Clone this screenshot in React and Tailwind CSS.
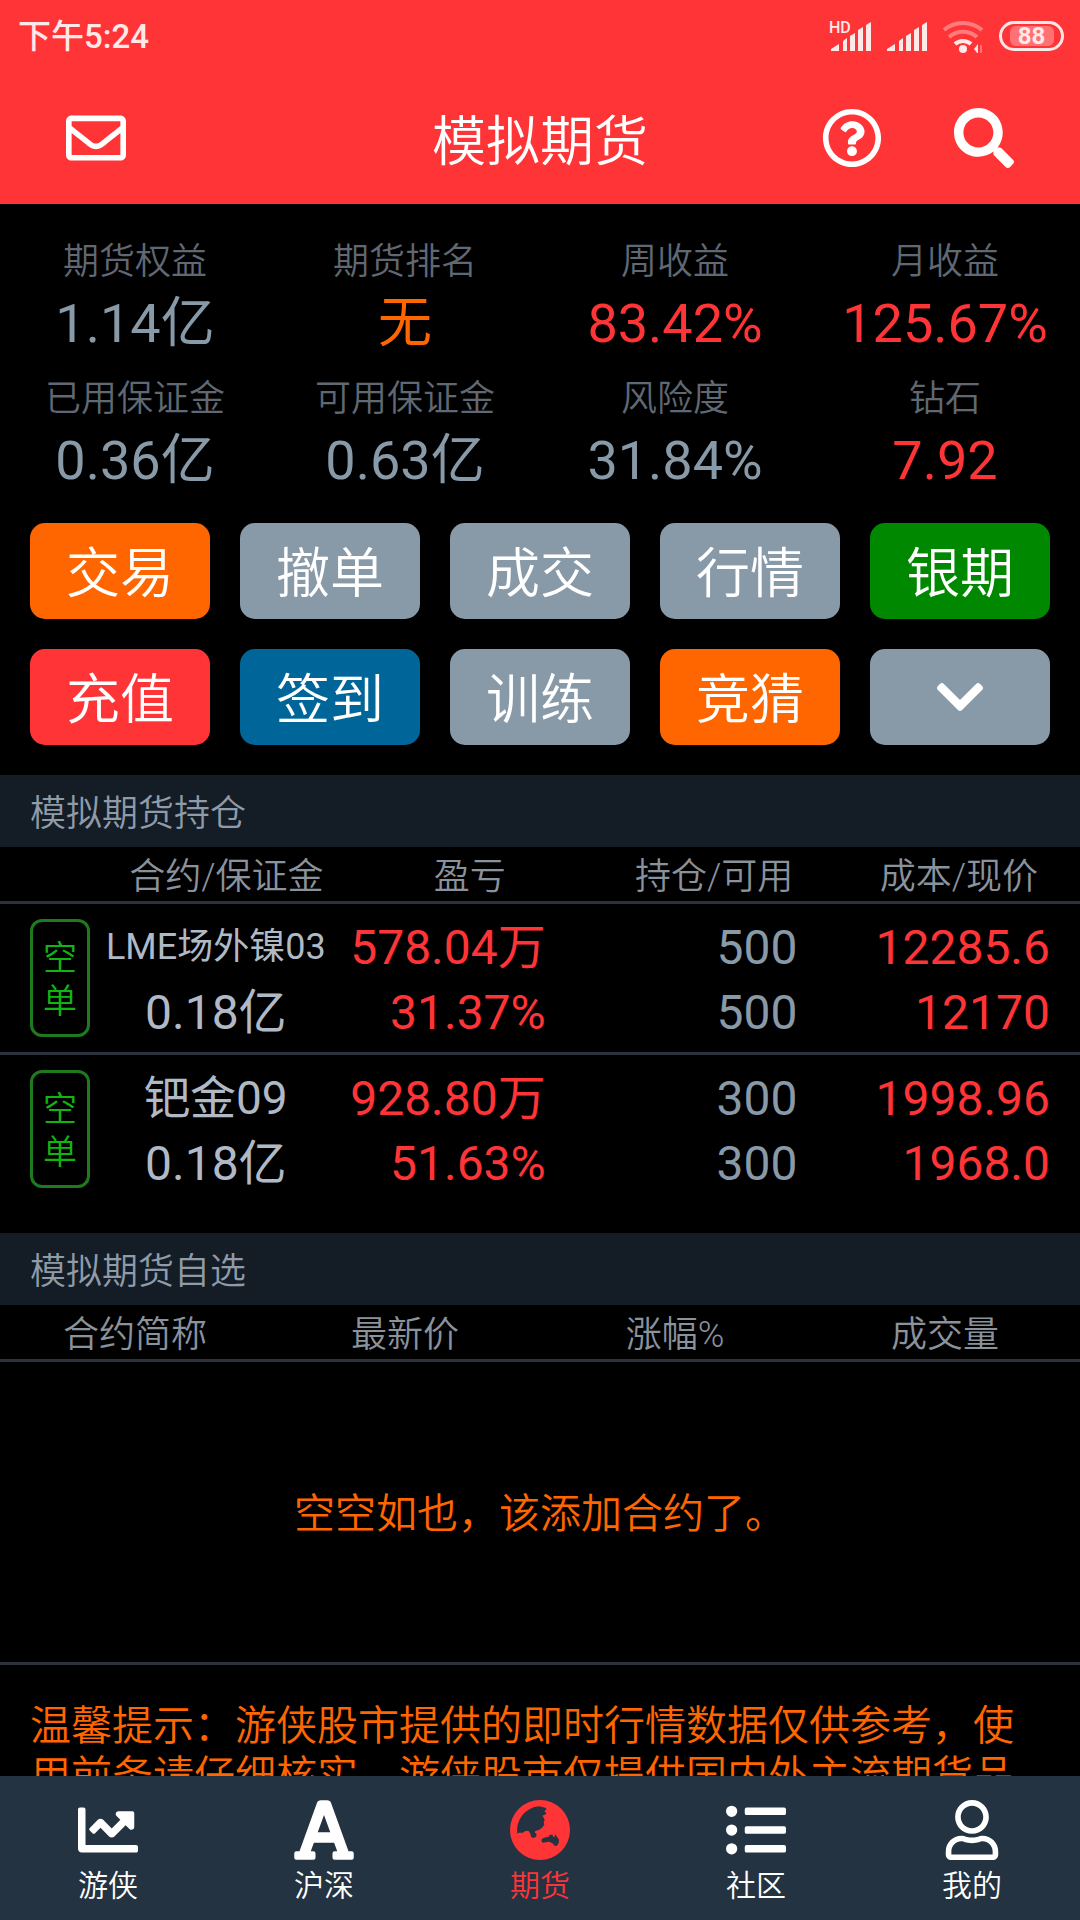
import React from 'react';
import {
  FaRegEnvelope,
  FaRegQuestionCircle,
  FaSearch,
  FaChevronDown,
  FaChartLine,
  FaFont,
  FaListUl,
  FaRegUser,
} from 'react-icons/fa';

const stats = [
  { label: '期货权益', value: '1.14亿', color: 'text-[#8899a8]' },
  { label: '期货排名', value: '无', color: 'text-[#ff6600]' },
  { label: '周收益', value: '83.42%', color: 'text-[#ff3437]' },
  { label: '月收益', value: '125.67%', color: 'text-[#ff3437]' },
  { label: '已用保证金', value: '0.36亿', color: 'text-[#8899a8]' },
  { label: '可用保证金', value: '0.63亿', color: 'text-[#8899a8]' },
  { label: '风险度', value: '31.84%', color: 'text-[#8899a8]' },
  { label: '钻石', value: '7.92', color: 'text-[#ff3437]' },
];

const actions = [
  { label: '交易', bg: 'bg-[#ff6600]' },
  { label: '撤单', bg: 'bg-[#8899a8]' },
  { label: '成交', bg: 'bg-[#8899a8]' },
  { label: '行情', bg: 'bg-[#8899a8]' },
  { label: '银期', bg: 'bg-[#008800]' },
  { label: '充值', bg: 'bg-[#ff3437]' },
  { label: '签到', bg: 'bg-[#006699]' },
  { label: '训练', bg: 'bg-[#8899a8]' },
  { label: '竞猜', bg: 'bg-[#ff6600]' },
];

const positions = [
  {
    name: 'LME场外镍03',
    nameSize: 'text-[36px]',
    margin: '0.18亿',
    profit: '578.04万',
    rate: '31.37%',
    held: '500',
    usable: '500',
    cost: '12285.6',
    price: '12170',
  },
  {
    name: '钯金09',
    nameSize: 'text-[46px]',
    margin: '0.18亿',
    profit: '928.80万',
    rate: '51.63%',
    held: '300',
    usable: '300',
    cost: '1998.96',
    price: '1968.0',
  },
];

const SignalBars = ({ hd }) => (
  <svg width="42" height="34" viewBox="0 0 42 34" fill="currentColor" className="overflow-visible">
    {hd && (
      <text x="-2" y="14" fontSize="16" fontWeight="500">HD</text>
    )}
    <path d="M0 32v-2l8-5v7z" />
    <path d="M12 22l4-3v13h-4z" />
    <path d="M19 17l5-3v18h-5z" />
    <path d="M27 11l5-3v24h-5z" />
    <path d="M35 6l5-3v29h-5z" />
  </svg>
);

const WifiIcon = () => (
  <svg width="42" height="34" viewBox="0 0 42 34" fill="none" stroke="currentColor" strokeWidth="4">
    <path d="M1 11a29 29 0 0 1 38 0" opacity="0.4" />
    <path d="M6 18a21 21 0 0 1 28 0" opacity="0.4" />
    <path d="M12 25a12 12 0 0 1 16 0" />
    <circle cx="20" cy="30" r="4" fill="currentColor" stroke="none" />
    <path d="M31 30l4-5v10z" fill="currentColor" stroke="none" />
    <path d="M38 26v8" strokeWidth="1" opacity="0.7" />
  </svg>
);

const GlobeIcon = ({ size }) => (
  <svg width={size} height={size} viewBox="0 0 180 180" fill="currentColor">
    <path
      fillRule="evenodd"
      d="M90 0a90 90 0 1 1 0 180a90 90 0 1 1 0-180z
        M18 102l8-4 12 0 8-5 9-1 6 9 2 9 6 4 9-3 2-8-6-6 2-4 12-4 8-6 7-9-2-7 3-7-3-7-4-6 10-4 2-4-6-5 7-7-4-4-18-4a72 72 0 0 0-66 83z
        M94 122l2-6 11-4 8-1 5-7 8 0 1 6 5 1 2-9 5 9 6 8-1 10-5 8-6 1-5-5-4-4-9-4-10 2-9 1z"
    />
  </svg>
);

const tabs = [
  { label: '游侠', icon: FaChartLine },
  { label: '沪深', icon: FaFont, size: 68 },
  { label: '期货', icon: GlobeIcon, active: true },
  { label: '社区', icon: FaListUl },
  { label: '我的', icon: FaRegUser },
];

const StatusBar = () => (
  <div className="flex h-[72px] items-center justify-between pr-4 pl-[18px] text-[#ffe8e8]">
    <span className="pt-[2px] text-[33px] font-medium">下午5:24</span>
    <div className="flex items-center gap-[14px]">
      <SignalBars hd />
      <SignalBars />
      <WifiIcon />
      <div className="flex h-[30px] w-[65px] items-center justify-center rounded-full border-3 border-current">
        <span className="flex h-5 w-[44px] items-center justify-center rounded-md bg-white/30 text-2xl font-bold">
          88
        </span>
      </div>
    </div>
  </div>
);

const Header = () => (
  <header className="bg-[#ff3437] text-white">
    <StatusBar />
    <div className="flex h-[132px] items-center px-[30px]">
      <div className="flex w-[264px]">
        <button aria-label="消息" className="flex w-[132px] justify-center">
          <FaRegEnvelope size={60} />
        </button>
      </div>
      <h1 className="flex-1 pt-2 text-center text-[54px] font-[350]">模拟期货</h1>
      <div className="flex w-[264px]">
        <button aria-label="帮助" className="flex w-[132px] justify-center">
          <FaRegQuestionCircle size={60} />
        </button>
        <button aria-label="搜索" className="flex w-[132px] justify-center">
          <FaSearch size={60} />
        </button>
      </div>
    </div>
  </header>
);

const SectionTitle = ({ children }) => (
  <h2 className="h-[72px] bg-[#141c26] px-[30px] pt-1 text-[36px] leading-[70px] font-[350] text-[#8f9ba8]">
    {children}
  </h2>
);

const Positions = () => (
  <section className="pb-[30px]">
    <SectionTitle>模拟期货持仓</SectionTitle>
    <table className="w-full table-fixed border-separate border-spacing-0 text-right">
      <thead className="text-[36px] leading-[48px] text-[#8a929c] *:*:border-b-3 *:*:border-[#2b323c] *:*:p-0 *:*:pt-[6px] *:*:font-[350]">
        <tr>
          <th className="w-[90px]" aria-label="方向" />
          <th className="w-[23.3%]"><div className="pr-[18px]">合约/保证金</div></th>
          <th className="w-[18.9%]"><div className="pr-[40px]">盈亏</div></th>
          <th className="w-[23.3%]"><div className="pr-1">持仓/可用</div></th>
          <th><div className="pr-[42px]">成本/现价</div></th>
        </tr>
      </thead>
      <tbody className="text-[48px] leading-[65px] text-[#ff3437]">
        {positions.map((p) => (
          <tr
            key={p.name}
            className="h-[151px] *:border-b-3 *:border-[#2b323c] last:h-[148px] last:*:border-b-0"
          >
            <td className="pl-[30px]">
              <div className="flex h-[118px] w-[60px] flex-col items-center justify-center rounded-[12px] border-3 border-[#1f7a1f] pt-1 text-[34px] leading-[43px] font-[350] text-[#11b511]">
                <span>空</span>
                <span>单</span>
              </div>
            </td>
            <td className="pt-1 text-center whitespace-nowrap text-[#b0bac6]">
              <div className={`leading-[65px] ${p.nameSize}`}>{p.name}</div>
              <div>{p.margin}</div>
            </td>
            <td className="pt-1 whitespace-nowrap">
              <div>{p.profit}</div>
              <div>{p.rate}</div>
            </td>
            <td className="pt-1 text-[#8899a8]">
              <div>{p.held}</div>
              <div>{p.usable}</div>
            </td>
            <td className="pt-1 pr-[30px]">
              <div>{p.cost}</div>
              <div>{p.price}</div>
            </td>
          </tr>
        ))}
      </tbody>
    </table>
  </section>
);

const Watchlist = () => (
  <section>
    <SectionTitle>模拟期货自选</SectionTitle>
    <table className="w-full table-fixed border-separate border-spacing-0 text-center">
      <thead className="text-[36px] leading-[48px] text-[#8a929c] *:*:border-b-3 *:*:border-[#2b323c] *:*:p-0 *:*:pt-[6px] *:*:font-[350]">
        <tr>
          <th>合约简称</th>
          <th>最新价</th>
          <th>涨幅%</th>
          <th>成交量</th>
        </tr>
      </thead>
      <tbody>
        <tr className="h-[303px]">
          <td colSpan={4} className="border-b-3 border-[#2b323c] pt-[6px] text-[41px] font-[350] text-[#ff6600]">
            空空如也，该添加合约了。
          </td>
        </tr>
      </tbody>
    </table>
  </section>
);

const TabBar = () => (
  <nav className="flex h-[144px] shrink-0 bg-[#243342] text-white">
    {tabs.map(({ label, icon: Icon, size = 60, active }) => (
      <a
        key={label}
        href="#"
        className={`flex flex-1 flex-col items-center pt-6 text-[30px] leading-[52px] font-[350] ${active ? 'text-[#ff3437]' : ''}`}
      >
        <span className="flex h-[60px] items-center">
          <Icon size={size} />
        </span>
        {label}
      </a>
    ))}
  </nav>
);

const App = () => {
  return (
    <div className="flex h-screen flex-col bg-black font-[Roboto,'Noto_Sans_CJK_SC',sans-serif]">
      <Header />
      <main className="min-h-0 flex-1 overflow-y-auto [scrollbar-width:none]">
        <dl className="grid grid-cols-4 gap-y-[13px] pt-[31px] pb-[27px] text-center">
          {stats.map((s) => (
            <div key={s.label}>
              <dt className="text-[36px] leading-[54px] font-[350] text-[#5f6873]">{s.label}</dt>
              <dd className={`text-[54px] leading-[70px] ${s.color}`}>{s.value}</dd>
            </div>
          ))}
        </dl>
        <div className="grid grid-cols-5 gap-[30px] px-[30px] pb-[30px] text-[54px] text-white">
          {actions.map((a) => (
            <button key={a.label} className={`h-24 rounded-[15px] pt-2 leading-[88px] font-[350] ${a.bg}`}>
              {a.label}
            </button>
          ))}
          <button aria-label="更多" className="flex h-24 items-center justify-center rounded-[15px] bg-[#8899a8]">
            <FaChevronDown size={54} />
          </button>
        </div>
        <Positions />
        <Watchlist />
        <p className="px-[30px] pt-[36px] text-[41px] leading-[50px] font-[350] text-[#ff6600]">
          温馨提示：游侠股市提供的即时行情数据仅供参考，使用前务请仔细核实，游侠股市仅提供国内外主流期货品
        </p>
      </main>
      <TabBar />
    </div>
  );
};

export default App;
